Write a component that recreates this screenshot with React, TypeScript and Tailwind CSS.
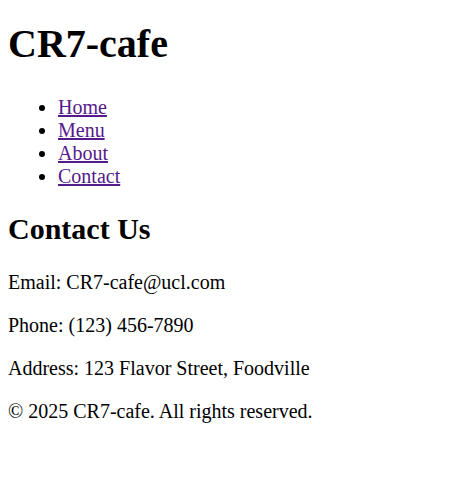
export default function App() {
  return (
    <div className="bg-white text-black px-[8px] pt-[1px] text-[20px] leading-[23px] font-['Liberation_Serif','Times_New_Roman',serif]">
      <header>
        <h1 className="text-[40px] leading-[46px] font-bold mt-[20px] mb-[29px]">CR7-cafe</h1>
        <nav>
          <ul className="list-disc pl-[50px] my-[20px]">
            <li><a href="#" className="underline text-[#551a8b]">Home</a></li>
            <li><a href="#" className="underline text-[#551a8b]">Menu</a></li>
            <li><a href="#" className="underline text-[#551a8b]">About</a></li>
            <li><a href="#" className="underline text-[#551a8b]">Contact</a></li>
          </ul>
        </nav>
      </header>
      <main>
        <section>
          <h2 className="text-[30px] leading-[34px] font-bold mt-[24px] mb-[25px]">Contact Us</h2>
          <p className="my-[20px]">Email: CR7-cafe@ucl.com</p>
          <p className="my-[20px]">Phone: (123) 456-7890</p>
          <p className="my-[20px]">Address: 123 Flavor Street, Foodville</p>
        </section>
      </main>
      <footer>
        <p className="my-[20px]">© 2025 CR7-cafe. All rights reserved.</p>
      </footer>
    </div>
  );
}
